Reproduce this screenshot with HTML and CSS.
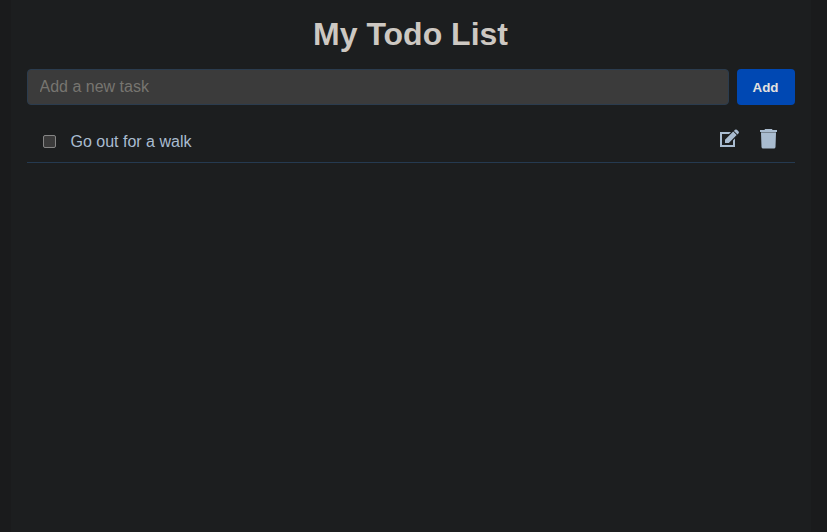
FILE: index.html
```html
<!DOCTYPE html>
<html lang="en">
<head>
<meta charset="utf-8">
<title>My Todo List</title>
<link rel="stylesheet" href="styles.css">
</head>
<body>
<main class="app">
  <h1 class="title">My Todo List</h1>
  <form class="task-form">
    <input class="task-input" type="text" placeholder="Add a new task">
    <button class="add-button" type="button">Add</button>
  </form>
  <ul class="tasks">
    <li class="task">
      <input class="task-check" type="checkbox" aria-label="Done">
      <span class="task-name">Go out for a walk</span>
      <button class="icon-button" type="button" aria-label="Edit">
        <svg width="20" height="20" viewBox="0 0 20 20" fill="currentColor"><path d="M0 3H11L9 5H2V16H13V11.500L15 9.500V18H0Z"/><path d="M5 14V10.800L13.200 2.600 16.700 6.100 8.800 14ZM13.900 1.900 15 .8Q16 0 16.900.8L18.600 2.500Q19.400 3.400 18.600 4.300L17.500 5.400Z"/></svg>
      </button>
      <button class="icon-button" type="button" aria-label="Delete">
        <svg width="18" height="20" viewBox="0 0 18 20" fill="currentColor"><path d="M5 0H12L12.500 1H17V3H0V1H4.500ZM1 4H16L15.500 18Q15.400 19.500 13.800 19.500H3.200Q1.600 19.500 1.500 18Z"/><path d="M1 3H16V4H1Z" opacity=".65"/></svg>
      </button>
    </li>
  </ul>
</main>
</body>
</html>
```
FILE: styles.css
```css
* {
  box-sizing: border-box;
}

body {
  margin: 0;
  background: #1a1b1c;
  font-family: "Liberation Sans", Arial, sans-serif;
}

.app {
  width: 800px;
  min-height: 532px;
  margin-left: 10.500px;
  padding: 16px;
  background: #1c1e1f;
}

.title {
  margin: 0 0 17px;
  font-size: 32px;
  line-height: 36px;
  text-align: center;
  color: #cdc8c2;
}

.task-form {
  display: flex;
  gap: 8px;
}

.task-input {
  flex: 1;
  height: 36px;
  padding: 0 12px;
  border: 1px solid #2b3c4e;
  border-radius: 4px;
  background: #3b3b3b;
  color: #cdc8c2;
  font: 16px "Liberation Sans", Arial, sans-serif;
}

.task-input::placeholder {
  color: #777570;
}

.add-button {
  width: 58px;
  height: 36px;
  padding: 0;
  border: 0;
  border-radius: 4px;
  background: #0048b3;
  color: #e4e2df;
  font: 700 13.333px "Liberation Sans", Arial, sans-serif;
}

.tasks {
  margin: 16px 0 0;
  padding: 0;
  list-style: none;
}

.task {
  display: flex;
  align-items: center;
  height: 42px;
  padding: 0 16.500px 0 16px;
  border-bottom: 1px solid #253a50;
}

.task-check {
  appearance: none;
  width: 13px;
  height: 13px;
  margin: 0;
  border: 1px solid #858585;
  border-radius: 2px;
  background: #3b3b3b;
}

.task-name {
  flex: 1;
  margin-left: 15px;
  font-size: 16px;
  color: #a9bcd0;
}

.icon-button {
  display: flex;
  margin: 0 0 5px 20px;
  padding: 0;
  border: 0;
  background: none;
  color: #a9bcd0;
}
```
